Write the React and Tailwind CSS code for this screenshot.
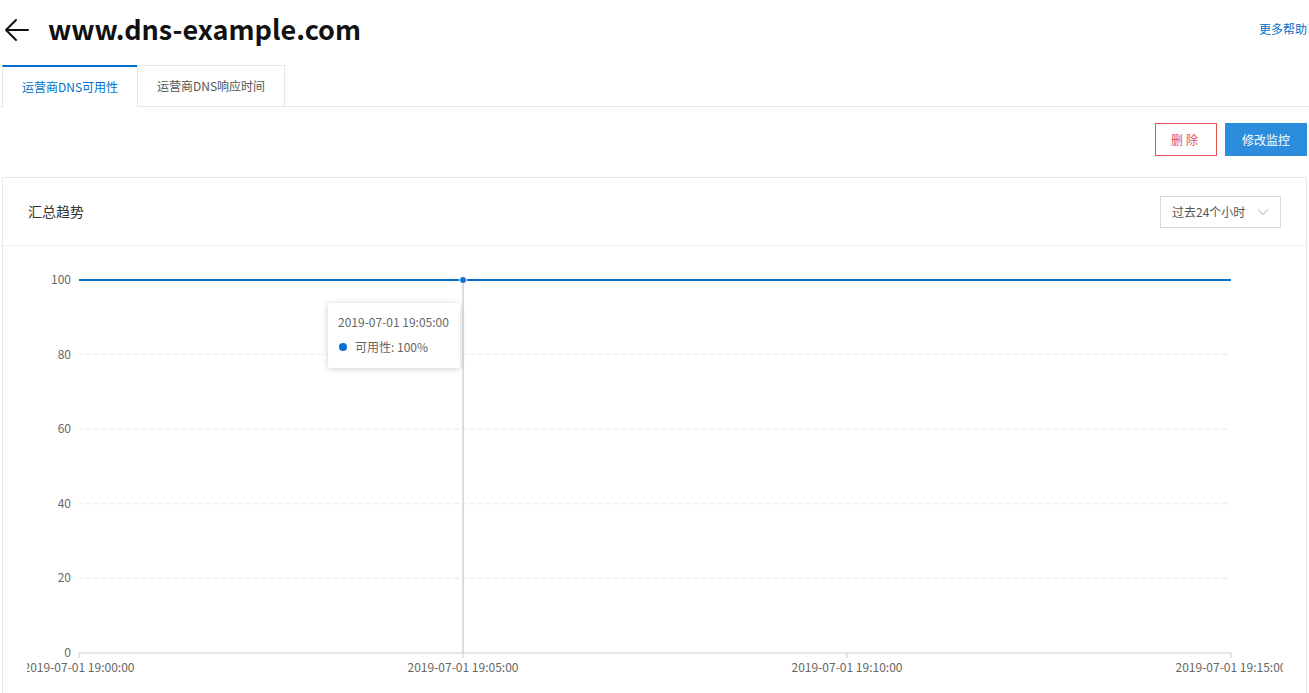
import React from "react";

const yTicks = [
  { v: 100, y: 34 },
  { v: 80, y: 108.6 },
  { v: 60, y: 183.2 },
  { v: 40, y: 257.8 },
  { v: 20, y: 332.4 },
  { v: 0, y: 407 },
];
const xTicks = [
  { x: 52, t: "2019-07-01 19:00:00" },
  { x: 436, t: "2019-07-01 19:05:00" },
  { x: 820, t: "2019-07-01 19:10:00" },
  { x: 1204, t: "2019-07-01 19:15:00" },
];

function Chart() {
  return (
    <svg width="1256" height="447" className="block" style={{ fontFamily: "'Noto Sans CJK SC', sans-serif" }}>
      {yTicks.map((t) => (
        <g key={t.v}>
          <text x="44" y={t.y + 4} textAnchor="end" fontSize="12" fill="#666">
            {t.v}
          </text>
          {t.v !== 0 && t.v !== 100 && (
            <line x1="52" x2="1204" y1={t.y} y2={t.y} stroke="#e6e6e6" strokeDasharray="4 4" />
          )}
        </g>
      ))}
      <line x1="52" x2="1204" y1="407" y2="407" stroke="#ccc" />
      {xTicks.map((t) => (
        <g key={t.x}>
          <line x1={t.x} x2={t.x} y1="407" y2="412" stroke="#ccc" />
          <text x={t.x} y="426" textAnchor="middle" fontSize="12" fill="#666">
            {t.t}
          </text>
        </g>
      ))}
      <line x1="436" x2="436" y1="34" y2="407" stroke="#d0d0d0" strokeWidth="1.5" />
      <line x1="52" x2="1204" y1="34" y2="34" stroke="#0a6fd1" strokeWidth="2" />
      <circle cx="436" cy="34" r="3.5" fill="#0a6fd1" stroke="#fff" strokeWidth="1" />
    </svg>
  );
}

export default function App() {
  return (
    <div className="w-[1309px] h-[693px] overflow-hidden bg-white font-['Noto_Sans_CJK_SC',sans-serif] text-[#333]">
      {/* header */}
      <div className="flex items-center h-[60px] pl-[4px] pr-[2px]">
        <svg width="26" height="26" viewBox="0 0 26 26" fill="none" stroke="#111" strokeWidth="2" strokeLinecap="round" strokeLinejoin="round">
          <path d="M24 13H2M12 3L2 13l10 10" />
        </svg>
        <h1 className="ml-[18px] mb-[3px] text-[27px] font-bold text-[#111] leading-none">www.dns-example.com</h1>
        <a className="ml-auto mb-[3px] text-[12px] text-[#0070cc]">更多帮助</a>
      </div>

      {/* tabs */}
      <div className="mt-[5px] flex h-[42px] border-b border-[#e6e6e6]">
        <div className="ml-[2px] w-[135px] h-[42px] -mb-px bg-white border-t-2 border-t-[#0070cc] border-l border-l-[#e6e6e6] flex items-center justify-center text-[12px] text-[#0070cc]">
          运营商DNS可用性
        </div>
        <div className="w-[148px] border border-[#e6e6e6] border-b-0 flex items-center justify-center text-[12px] text-[#555]">
          运营商DNS响应时间
        </div>
      </div>

      {/* actions */}
      <div className="mt-[16px] flex justify-end gap-[8px] pr-[2px]">
        <button className="w-[62px] h-[33px] border border-[#e0524a] text-[#e0524a] text-[12px] tracking-[3px] bg-white">删除</button>
        <button className="w-[82px] h-[33px] bg-[#2b8ddb] text-white text-[12px]">修改监控</button>
      </div>

      {/* card */}
      <div className="mt-[21px] ml-[2px] mr-[2px] border border-[#e8e8e8] h-[600px]">
        <div className="h-[68px] flex items-center justify-between pl-[25px] pr-[25px] border-b border-[#eeeeee]">
          <span className="text-[14px] text-[#333]">汇总趋势</span>
          <div className="w-[121px] h-[32px] border border-[#d9d9d9] flex items-center justify-between pl-[11px] pr-[11px] text-[12px] text-[#555]">
            <span>过去24个小时</span>
            <svg width="12" height="8" viewBox="0 0 12 8" fill="none" stroke="#aaa" strokeWidth="1">
              <path d="M1 1.5l5 5 5-5" />
            </svg>
          </div>
        </div>
        <div className="relative ml-[24px] w-[1256px] overflow-hidden">
          <Chart />
          <div className="absolute left-[301px] top-[57px] w-[132px] h-[65px] bg-white shadow-[0_1px_6px_rgba(0,0,0,0.2)] rounded-[2px] px-[10px] pt-[10px] text-[12px] text-[#666]">
            <div className="leading-[18px]">2019-07-01 19:05:00</div>
            <div className="mt-[7px] flex items-center leading-[18px]">
              <span className="w-[8px] h-[8px] rounded-full bg-[#0a6fd1] ml-[1px] mr-[8px]" />
              <span>可用性: 100%</span>
            </div>
          </div>
        </div>
      </div>
    </div>
  );
}
